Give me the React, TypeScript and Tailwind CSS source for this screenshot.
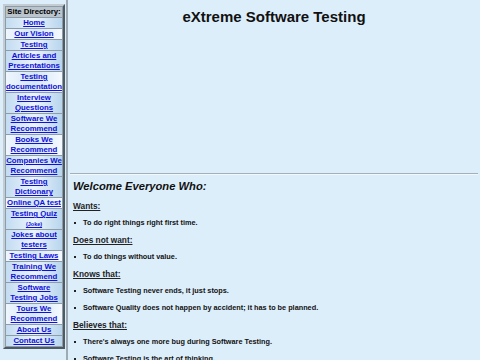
import React from 'react';

type NavItem = { lines: string[]; small?: string };

const navItems: NavItem[] = [
  { lines: ['Home'] },
  { lines: ['Our Vision'] },
  { lines: ['Testing'] },
  { lines: ['Articles and', 'Presentations'] },
  { lines: ['Testing', 'documentation'] },
  { lines: ['Interview', 'Questions'] },
  { lines: ['Software We', 'Recommend'] },
  { lines: ['Books We', 'Recommend'] },
  { lines: ['Companies We', 'Recommend'] },
  { lines: ['Testing', 'Dictionary'] },
  { lines: ['Online QA test'] },
  { lines: ['Testing Quiz'], small: '(Joke)' },
  { lines: ['Jokes about', 'testers'] },
  { lines: ['Testing Laws'] },
  { lines: ['Training We', 'Recommend'] },
  { lines: ['Software', 'Testing Jobs'] },
  { lines: ['Tours We', 'Recommend'] },
  { lines: ['About Us'] },
  { lines: ['Contact Us'] },
];

const sections = [
  { title: 'Wants:', items: ['To do right things right first time.'] },
  { title: 'Does not want:', items: ['To do things without value.'] },
  {
    title: 'Knows that:',
    items: [
      'Software Testing never ends, it just stops.',
      'Software Quality does not happen by accident; it has to be planned.',
    ],
  },
  {
    title: 'Believes that:',
    items: [
      "There's always one more bug during Software Testing.",
      'Software Testing is the art of thinking.',
    ],
  },
];

const Sidebar: React.FC = () => (
  <div className="w-[68px] shrink-0 border-r-2 border-[#9fabb4] pt-[4px] pl-[3px]">
    <div className="w-[62px] border-2 border-t-[#c3ccd3] border-l-[#c3ccd3] border-r-[#4f5b63] border-b-[#4f5b63] bg-[#8e9ca7] p-[1px] flex flex-col gap-[1px]">
      <div className="bg-[#b9c4cc] text-center text-[7.8px] leading-[10px] font-bold text-black whitespace-nowrap">
        Site Directory:
      </div>
      {navItems.map((item, i) => (
        <div
          key={i}
          className={
            i % 3 === 1
              ? 'bg-gradient-to-r from-[#eef6fd] via-[#d4e7f7] to-[#f4f9fe] text-center whitespace-nowrap'
              : 'bg-gradient-to-r from-[#c3dcf1] via-[#eaf4fc] to-[#b8d5ed] text-center whitespace-nowrap'
          }
        >
          {item.lines.map((line, j) => (
            <div key={j} className="text-[7.8px] leading-[10px] font-bold text-[#1010d8] underline">
              {line}
            </div>
          ))}
          {item.small && (
            <div className="text-[5.5px] leading-[10px] font-bold text-[#1010d8] underline">{item.small}</div>
          )}
        </div>
      ))}
    </div>
  </div>
);

const App: React.FC = () => {
  return (
    <div
      className="min-h-screen w-full bg-[#ddeefb] flex text-black overflow-hidden"
      style={{ fontFamily: '"Liberation Sans", Arial, sans-serif' }}
    >
      <Sidebar />
      <div className="flex-1 min-w-0">
        <div className="pt-[8px] text-center text-[15px] leading-[18px] font-bold text-[#111]">
          eXtreme Software Testing
        </div>
        <div className="h-[147px]" />
        <div className="mx-[2px] border-t border-t-[#a4b0b9] border-b border-b-[#f2f8fd]" />
        <div className="pl-[5px]">
          <h1 className="mt-[4px] text-[11.2px] leading-[14px] font-bold italic text-[#111]">
            Welcome Everyone Who:
          </h1>
          <div className="mt-[8px] flex flex-col gap-[7px]">
            {sections.map((s) => (
              <React.Fragment key={s.title}>
                <div className="text-[8.3px] leading-[10px] font-bold underline text-[#222]">{s.title}</div>
                {s.items.map((it) => (
                  <div key={it} className="flex items-center text-[7.3px] leading-[10px] font-bold text-[#111] whitespace-nowrap">
                    <span className="ml-[1px] w-[2px] h-[2px] bg-[#222] shrink-0" />
                    <span className="ml-[7px]">{it}</span>
                  </div>
                ))}
              </React.Fragment>
            ))}
          </div>
        </div>
      </div>
    </div>
  );
};

export default App;
